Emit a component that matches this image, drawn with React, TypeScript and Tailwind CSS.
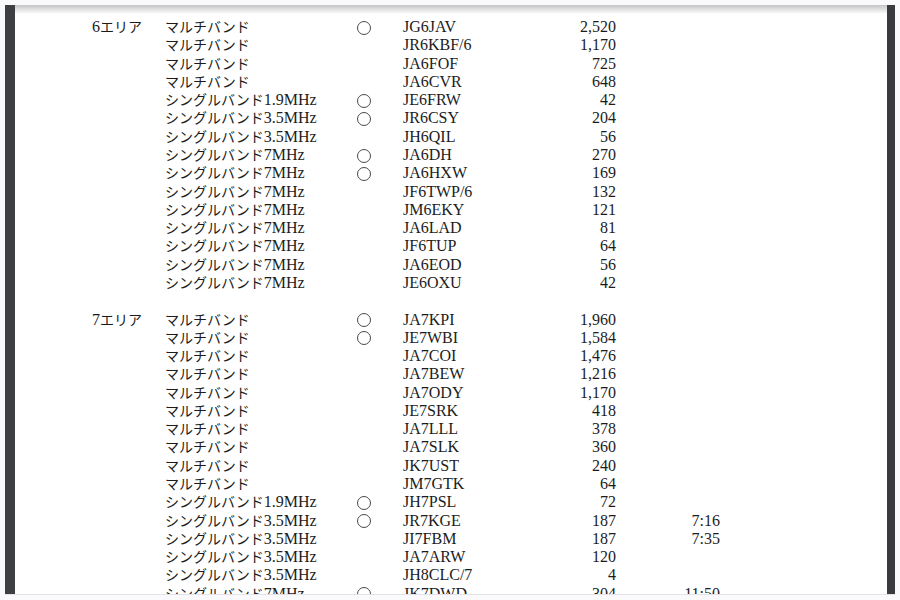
type Row = {
  area?: string
  cat: string
  mark?: boolean
  call: string
  score: string
  time?: string
}

const rows: (Row | null)[] = [
  { area: '6', cat: 'マルチバンド', mark: true, call: 'JG6JAV', score: '2,520' },
  { cat: 'マルチバンド', call: 'JR6KBF/6', score: '1,170' },
  { cat: 'マルチバンド', call: 'JA6FOF', score: '725' },
  { cat: 'マルチバンド', call: 'JA6CVR', score: '648' },
  { cat: 'シングルバンド|1.9MHz', mark: true, call: 'JE6FRW', score: '42' },
  { cat: 'シングルバンド|3.5MHz', mark: true, call: 'JR6CSY', score: '204' },
  { cat: 'シングルバンド|3.5MHz', call: 'JH6QIL', score: '56' },
  { cat: 'シングルバンド|7MHz', mark: true, call: 'JA6DH', score: '270' },
  { cat: 'シングルバンド|7MHz', mark: true, call: 'JA6HXW', score: '169' },
  { cat: 'シングルバンド|7MHz', call: 'JF6TWP/6', score: '132' },
  { cat: 'シングルバンド|7MHz', call: 'JM6EKY', score: '121' },
  { cat: 'シングルバンド|7MHz', call: 'JA6LAD', score: '81' },
  { cat: 'シングルバンド|7MHz', call: 'JF6TUP', score: '64' },
  { cat: 'シングルバンド|7MHz', call: 'JA6EOD', score: '56' },
  { cat: 'シングルバンド|7MHz', call: 'JE6OXU', score: '42' },
  null,
  { area: '7', cat: 'マルチバンド', mark: true, call: 'JA7KPI', score: '1,960' },
  { cat: 'マルチバンド', mark: true, call: 'JE7WBI', score: '1,584' },
  { cat: 'マルチバンド', call: 'JA7COI', score: '1,476' },
  { cat: 'マルチバンド', call: 'JA7BEW', score: '1,216' },
  { cat: 'マルチバンド', call: 'JA7ODY', score: '1,170' },
  { cat: 'マルチバンド', call: 'JE7SRK', score: '418' },
  { cat: 'マルチバンド', call: 'JA7LLL', score: '378' },
  { cat: 'マルチバンド', call: 'JA7SLK', score: '360' },
  { cat: 'マルチバンド', call: 'JK7UST', score: '240' },
  { cat: 'マルチバンド', call: 'JM7GTK', score: '64' },
  { cat: 'シングルバンド|1.9MHz', mark: true, call: 'JH7PSL', score: '72' },
  { cat: 'シングルバンド|3.5MHz', mark: true, call: 'JR7KGE', score: '187', time: '7:16' },
  { cat: 'シングルバンド|3.5MHz', call: 'JI7FBM', score: '187', time: '7:35' },
  { cat: 'シングルバンド|3.5MHz', call: 'JA7ARW', score: '120' },
  { cat: 'シングルバンド|3.5MHz', call: 'JH8CLC/7', score: '4' },
  { cat: 'シングルバンド|7MHz', mark: true, call: 'JK7DWD', score: '304', time: '11:50' },
]

// katakana in the reference run narrower than the latin text
function Cat({ text }: { text: string }) {
  const [jp, band] = text.split('|')
  return (
    <span className="whitespace-nowrap">
      <span className="text-[14px]">{jp}</span>
      {band}
    </span>
  )
}

export default function App() {
  return (
    <div
      className="w-[900px] h-[600px] bg-[#fafafc] pt-[5px] px-[5px] overflow-hidden text-[#1c1c1c]"
      style={{ fontFamily: '"Liberation Serif", "Noto Sans CJK JP", serif' }}
    >
      <div className="flex h-[590px] border-b border-[#e2e2e8]">
        <div className="w-[10px] bg-[#3e3f43]" />
        <div className="flex-1 bg-white overflow-hidden relative">
          <div className="absolute inset-x-0 top-0 h-[9px] bg-gradient-to-b from-[#c4c4c8] to-white/0" />
          <div className="pt-[13px] pl-[77px] text-[16px] leading-[18.29px]">
            {rows.map((r, i) =>
              r ? (
                <div key={i} className="grid grid-cols-[73px_185px_53px_157px_56px_104px] h-[18.29px]">
                  <span className="whitespace-nowrap">
                    {r.area}
                    {r.area && <span className="text-[14px]">エリア</span>}
                  </span>
                  <Cat text={r.cat} />
                  <span className="pl-[7px] flex items-center">
                    {r.mark && <span className="w-[14px] h-[14px] rounded-full border border-[#4a4a4a]" />}
                  </span>
                  <span>{r.call}</span>
                  <span className="text-right">{r.score}</span>
                  <span className="text-right">{r.time}</span>
                </div>
              ) : (
                <div key={i} className="h-[18.29px]" />
              )
            )}
          </div>
        </div>
        <div className="w-[8px] bg-[#3a3b3e]" />
      </div>
    </div>
  )
}
